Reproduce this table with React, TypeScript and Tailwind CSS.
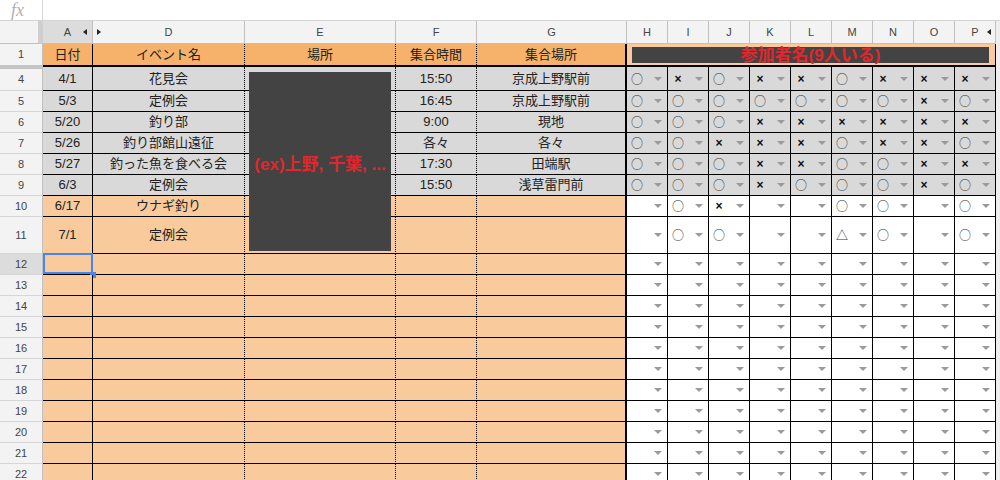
type Mark = "o" | "x" | "t" | "";

type Row = {
  n: number;
  h: string;
  tone: "grey" | "orange";
  a?: string;
  d?: string;
  f?: string;
  g?: string;
  marks: Mark[];
};

const m = (s: string): Mark[] =>
  s.split(" ").map((c) => (c === "-" ? "" : (c as Mark)));

const empty = m("- - - - - - - - -");

const rows: Row[] = [
  { n: 4, h: "h-[24px]", tone: "grey", a: "4/1", d: "花見会", f: "15:50", g: "京成上野駅前", marks: m("o x o x x o x x x") },
  { n: 5, h: "h-[21px]", tone: "grey", a: "5/3", d: "定例会", f: "16:45", g: "京成上野駅前", marks: m("o o o o o o o x o") },
  { n: 6, h: "h-[21px]", tone: "grey", a: "5/20", d: "釣り部", f: "9:00", g: "現地", marks: m("o o o x x x x x x") },
  { n: 7, h: "h-[21px]", tone: "grey", a: "5/26", d: "釣り部館山遠征", f: "各々", g: "各々", marks: m("o o x x x o x x o") },
  { n: 8, h: "h-[21px]", tone: "grey", a: "5/27", d: "釣った魚を食べる会", f: "17:30", g: "田端駅", marks: m("o o o x x o o x x") },
  { n: 9, h: "h-[21px]", tone: "grey", a: "6/3", d: "定例会", f: "15:50", g: "浅草雷門前", marks: m("o o o x o o o x o") },
  { n: 10, h: "h-[21px]", tone: "orange", a: "6/17", d: "ウナギ釣り", marks: m("- o x - - o o - o") },
  { n: 11, h: "h-[37px]", tone: "orange", a: "7/1", d: "定例会", marks: m("- o o - - t o - o") },
  ...[12, 13, 14, 15, 16, 17, 18, 19, 20, 21, 22].map(
    (n): Row => ({ n, h: "h-[21px]", tone: "orange", marks: empty })
  ),
];

const people = ["H", "I", "J", "K", "L", "M", "N", "O", "P"];

const Arrow = () => (
  <span className="w-0 h-0 border-x-4 border-t-4 border-x-transparent border-t-[#9a9a9a]" />
);

// the sheet's ○ / △ come from the CJK font, Liberation's are tiny
const Symbol = ({ v }: { v: Mark }) => {
  if (v === "o")
    return <span className="font-['Noto_Sans_CJK_JP',sans-serif] text-[12px] text-[#333]">○</span>;
  if (v === "x") return <span className="text-[12px] font-bold text-[#111]">×</span>;
  if (v === "t")
    return <span className="font-['Noto_Sans_CJK_JP',sans-serif] text-[12px] text-[#333]">△</span>;
  return null;
};

const LeftTri = () => (
  <span className="w-0 h-0 border-y-[3px] border-r-[4px] border-y-transparent border-r-[#222]" />
);
const RightTri = () => (
  <span className="w-0 h-0 border-y-[3px] border-l-[4px] border-y-transparent border-l-[#222]" />
);

const cell = "flex items-center justify-center border-b border-black";

const DataRow = ({ r }: { r: Row }) => {
  const fill = r.tone === "grey" ? "bg-[#d9d9d9]" : "bg-[#f9cb9c]";
  const pfill = r.tone === "grey" ? "bg-[#d9d9d9]" : "bg-white";
  const selected = r.n === 12;
  return (
    <div className={`flex ${r.h}`}>
      <div
        className={`w-[43px] flex items-center justify-center border-r border-b border-r-[#c0c0c0] border-b-[#d6d6d6] text-[11px] text-[#444] ${
          selected ? "bg-[#dcdcdc]" : "bg-[#f3f3f3]"
        } ${r.n === 4 ? "border-t-2 border-t-[#c4c4c4]" : ""}`}
      >
        {r.n}
      </div>
      <div className={`${cell} relative w-[50px] border-r ${fill}`}>
        {r.a}
        {selected && (
          <>
            <span className="absolute -top-px left-0 right-[-1px] bottom-0 border-2 border-[#4a86e8]" />
            <span className="absolute right-[-4px] bottom-[-4px] w-[6px] h-[6px] bg-[#4a86e8]" />
          </>
        )}
      </div>
      <div className={`${cell} w-[152px] border-r [border-right-style:dotted] ${fill}`}>{r.d}</div>
      <div className={`${cell} w-[151px] border-r [border-right-style:dotted] ${fill}`} />
      <div className={`${cell} w-[81px] border-r [border-right-style:dotted] ${fill}`}>{r.f}</div>
      <div className={`${cell} w-[150px] border-r-2 ${fill}`}>{r.g}</div>
      {r.marks.map((v, i) => (
        <div
          key={i}
          className={`w-[41px] flex items-center border-r border-b border-black pl-[3px] pr-[5px] ${pfill}`}
        >
          <span className="w-[14px] flex justify-center leading-none">
            <Symbol v={v} />
          </span>
          <span className="flex-1" />
          <Arrow />
        </div>
      ))}
    </div>
  );
};

export default function App() {
  return (
    <div className="relative w-[1000px] h-[480px] overflow-hidden bg-white font-['Liberation_Sans','Noto_Sans_CJK_JP',sans-serif] text-[13px] text-[#222]">
      {/* formula bar */}
      <div className="flex h-[21px] border-b border-[#d4d4d4] bg-white">
        <div className="w-[43px] flex items-center border-r border-[#d4d4d4] pl-[11px] italic text-[18px] leading-none text-[#b0b0b0] font-['Liberation_Serif',serif]">
          fx
        </div>
        <div className="flex-1" />
      </div>

      <div className="bg-[#eeeeee]">
        {/* column letters */}
        <div className="flex h-[23px] text-[11px] text-[#444]">
          <div className="w-[43px] bg-[#f3f3f3] border-r-[5px] border-b border-r-[#cfcfcf] border-b-[#c0c0c0]" />
          <div className="relative w-[50px] flex items-center justify-center bg-[#dcdcdc] border-r border-b border-[#c0c0c0]">
            A
            <span className="absolute right-[5px] top-[8px] flex">
              <LeftTri />
            </span>
          </div>
          <div className="relative w-[152px] flex items-center justify-center bg-[#f3f3f3] border-r border-b border-[#c0c0c0]">
            <span className="absolute left-[4px] top-[8px] flex">
              <RightTri />
            </span>
            D
          </div>
          {[
            ["E", "w-[151px]"],
            ["F", "w-[81px]"],
            ["G", "w-[150px]"],
          ].map(([c, w]) => (
            <div key={c} className={`${w} flex items-center justify-center bg-[#f3f3f3] border-r border-b border-[#c0c0c0]`}>
              {c}
            </div>
          ))}
          {people.map((c) => (
            <div key={c} className="relative w-[41px] flex items-center justify-center bg-[#f3f3f3] border-r border-b border-[#c0c0c0]">
              {c}
              {c === "P" && (
                <span className="absolute right-[4px] top-[8px] flex">
                  <LeftTri />
                </span>
              )}
            </div>
          ))}
        </div>

        {/* row 1 */}
        <div className="flex h-[21px]">
          <div className="w-[43px] flex items-center justify-center bg-[#f3f3f3] border-r border-[#c0c0c0] text-[11px] text-[#444]">
            1
          </div>
          <div className="w-[50px] flex items-center justify-center bg-[#f6b26b] border-r border-black">日付</div>
          <div className="w-[152px] flex items-center justify-center bg-[#f6b26b] border-r border-black [border-right-style:dotted]">イベント名</div>
          <div className="w-[151px] flex items-center justify-center bg-[#f6b26b] border-r border-black [border-right-style:dotted]">場所</div>
          <div className="w-[81px] flex items-center justify-center bg-[#f6b26b] border-r border-black [border-right-style:dotted]">集合時間</div>
          <div className="w-[150px] flex items-center justify-center bg-[#f6b26b] border-r-2 border-black">集合場所</div>
          <div className="w-[369px] bg-[#f9cb9c] border-r border-black pt-[3px] pb-[2px] pl-[5px] pr-[6px]">
            <div className="h-full flex items-center justify-center bg-[#434343] text-[#e3262b] font-bold text-[17px] leading-none">
              参加者名(9人いる)
            </div>
          </div>
        </div>

        {/* frozen rows divider */}
        <div className="flex h-[2px]">
          <div className="w-[43px] bg-[#c4c4c4]" />
          <div className="w-[953px] bg-black" />
        </div>

        {rows.map((r) => (
          <DataRow key={r.n} r={r} />
        ))}
      </div>

      {/* drawing over 場所 column */}
      <div className="absolute left-[249px] top-[72px] w-[142px] h-[179px] bg-[#434343] flex items-center justify-center pt-[7px] text-[#e3262b] font-bold text-[17px] whitespace-nowrap">
        (ex)上野, 千葉, ...
      </div>
    </div>
  );
}
